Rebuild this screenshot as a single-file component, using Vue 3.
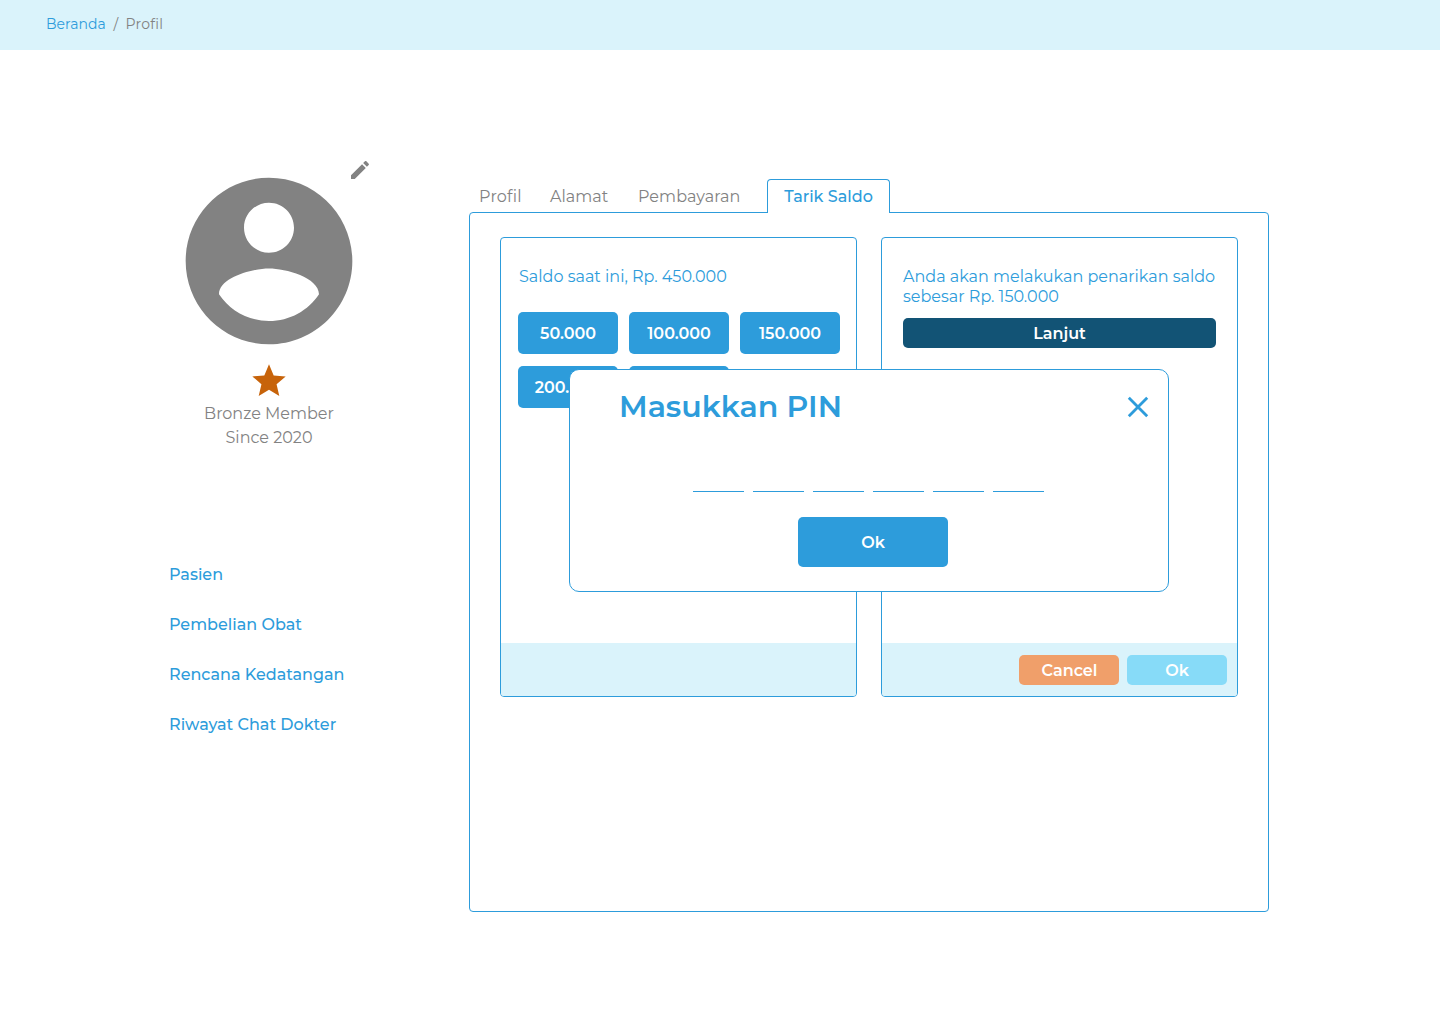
<script setup>
const links = ['Pasien', 'Pembelian Obat', 'Rencana Kedatangan', 'Riwayat Chat Dokter']
const amounts = ['50.000', '100.000', '150.000', '200.000', '250.000']
</script>

<template>
  <div class="page">
    <header class="crumbs">
      <a class="crumb-home">Beranda</a><span class="crumb-sep">/</span><span class="crumb-here">Profil</span>
    </header>
    <main class="main">
      <aside class="side">
        <div class="avatar-wrap">
          <svg class="avatar" viewBox="0 0 24 24"><path d="M12 2C6.48 2 2 6.48 2 12s4.48 10 10 10 10-4.48 10-10S17.52 2 12 2zm0 3c1.66 0 3 1.34 3 3s-1.34 3-3 3-3-1.34-3-3 1.34-3 3-3zm0 14.2c-2.5 0-4.71-1.28-6-3.22.03-1.99 4-3.08 6-3.08 1.99 0 5.97 1.09 6 3.08-1.29 1.94-3.5 3.22-6 3.22z" /></svg>
          <svg class="pencil" viewBox="0 0 24 24"><path d="M3 17.25V21h3.75L17.81 9.94l-3.75-3.75L3 17.25zM20.71 7.04c.39-.39.39-1.02 0-1.41l-2.34-2.34c-.39-.39-1.02-.39-1.41 0l-1.83 1.83 3.75 3.75 1.83-1.83z" /></svg>
        </div>
        <svg class="star" viewBox="0 0 24 24"><path d="M12 17.27L18.18 21l-1.64-7.03L22 9.24l-7.19-.61L12 2 9.19 8.63 2 9.24l5.46 4.73L5.82 21z" /></svg>
        <div class="member">Bronze Member<br />Since 2020</div>
        <nav class="links">
          <a v-for="l in links" :key="l">{{ l }}</a>
        </nav>
      </aside>
      <section class="content">
        <div class="tabs">
          <a class="tab tab-profil">Profil</a>
          <a class="tab tab-alamat">Alamat</a>
          <a class="tab tab-bayar">Pembayaran</a>
          <a class="tab tab-active">Tarik Saldo</a>
        </div>
        <div class="panel">
          <div class="card">
            <div class="card-body card-left">
              <p class="text balance">Saldo saat ini, Rp. 450.000</p>
              <div class="amounts">
                <button v-for="a in amounts" :key="a" class="btn amount">{{ a }}</button>
              </div>
            </div>
            <footer class="card-foot"></footer>
          </div>
          <div class="card">
            <div class="card-body card-right">
              <p class="text">Anda akan melakukan penarikan saldo<br />sebesar Rp. 150.000</p>
              <button class="btn next">Lanjut</button>
            </div>
            <footer class="card-foot">
              <button class="btn cancel">Cancel</button>
              <button class="btn ok">Ok</button>
            </footer>
          </div>
        </div>
      </section>
    </main>
    <div class="modal">
      <div class="modal-head">
        <h2>Masukkan PIN</h2>
        <svg class="close" viewBox="0 0 24 24"><path d="M2.8 2.8L21.2 21.2M21.2 2.8L2.8 21.2" /></svg>
      </div>
      <div class="pins"><span v-for="n in 6" :key="n" class="pin"></span></div>
      <button class="btn confirm">Ok</button>
    </div>
  </div>
</template>

<style>
body { margin: 0; background: #fff; }
</style>
<style scoped>
.page { position: relative; width: 1440px; height: 1024px; overflow: hidden; background: #fff; font-family: Montserrat, Inter, sans-serif; font-size: 16px; font-variant-ligatures: none; color: #828282; }
.crumbs { display: flex; align-items: center; box-sizing: border-box; height: 50px; padding: 0 46px 3px; background: #daf3fb; font-size: 14px; }
.crumb-home { color: #2d9cdb; letter-spacing: 0.05px; }
.crumb-sep { margin: 0 7.5px; }
.crumb-here { letter-spacing: 0.25px; }
.main { display: flex; gap: 100px; padding: 111px 0 0 169px; }
.side { width: 200px; display: flex; flex-direction: column; align-items: center; fill: #828282; }
.avatar-wrap { position: relative; height: 200px; }
.avatar { display: block; width: 200px; height: 200px; }
.pencil { position: absolute; right: -3px; top: -3px; width: 24px; height: 24px; }
.star { width: 40px; height: 40px; fill: #c7630a; }
.member { margin-top: 1px; line-height: 24px; text-align: center; }
.links { display: flex; flex-direction: column; gap: 26px; align-self: stretch; margin-top: 113px; color: #2d9cdb; font-weight: 500; line-height: 24px; white-space: nowrap; }
.content { width: 800px; padding-top: 18px; }
.tabs { display: flex; height: 34px; line-height: 36px; }
.tab { box-sizing: border-box; white-space: nowrap; }
.tab-profil { width: 71px; margin-left: 10px; letter-spacing: 0.25px; }
.tab-alamat { width: 88px; }
.tab-bayar { width: 129px; letter-spacing: 0.08px; }
.tab-active { position: relative; z-index: 1; width: 123px; border: 1px solid #2d9cdb; border-bottom: 0; border-radius: 4px 4px 0 0; background: #fff; color: #2d9cdb; font-weight: 500; text-align: center; line-height: 33px; }
.panel { display: flex; gap: 24px; box-sizing: border-box; height: 700px; margin-top: -1px; padding: 24px 30px; border: 1px solid #2d9cdb; border-radius: 4px; align-items: flex-start; }
.card { display: flex; flex-direction: column; box-sizing: border-box; width: 357px; height: 460px; border: 1px solid #2d9cdb; border-radius: 4px; overflow: hidden; }
.card-body { flex: 1; color: #2d9cdb; }
.card-left { padding: 29px 16px 0 17px; }
.card-right { padding: 29px 20px 0 21px; }
.text { margin: 0; line-height: 20px; white-space: nowrap; }
.balance { padding-left: 1px; }
.amounts { display: flex; flex-wrap: wrap; gap: 12px 11px; margin-top: 25px; }
.btn { display: block; padding: 0; border: 0; border-radius: 5px; background: #2d9cdb; color: #fff; font: 600 16px Montserrat, Inter, sans-serif; text-align: center; }
.amount { width: 100px; height: 42px; }
.next { width: 313px; height: 30px; margin-top: 11px; background: #125375; }
.card-foot { display: flex; justify-content: flex-end; gap: 8px; box-sizing: border-box; height: 53px; padding: 12px 10px; background: #daf3fb; }
.cancel, .ok { width: 100px; height: 30px; }
.cancel { padding-left: 1px; background: #f09f6a; }
.ok { background: #87dbf8; }
.modal { position: absolute; left: 569px; top: 369px; box-sizing: border-box; width: 600px; height: 223px; border: 1px solid #2d9cdb; border-radius: 10px; background: #fff; color: #2d9cdb; }
.modal-head { display: flex; justify-content: space-between; align-items: flex-start; padding: 18px 18px 0 49px; }
.modal h2 { margin: 0; font-size: 30px; font-weight: 600; line-height: 37px; }
.close { width: 24px; height: 24px; margin-top: 7px; fill: none; stroke: #2d9cdb; stroke-width: 2.8; }
.pins { display: flex; gap: 9px; margin: 66px 0 0 123px; }
.pin { width: 51px; height: 1px; background: #2d9cdb; }
.confirm { width: 150px; height: 50px; margin: 25px 0 0 228px; }
</style>
